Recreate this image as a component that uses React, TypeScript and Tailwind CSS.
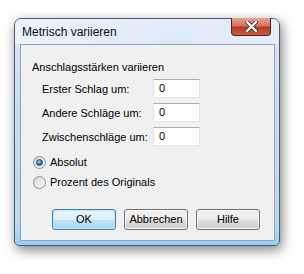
import { useState } from "react";

const font = { fontFamily: '"Liberation Sans", Arial, sans-serif' };

function Field({ label }: { label: string }) {
  return (
    <div className="flex items-center h-[19px]">
      <span className="w-[111px] shrink-0 whitespace-nowrap text-[11px] leading-[16px]">{label}</span>
      <div className="w-[47px] h-[19px] shrink-0 bg-white border border-[#abadb3] border-l-[#e2e3ea] border-r-[#e2e3ea] border-b-[#e3e9ef] flex items-center pl-[5px] text-[11px]">
        0
      </div>
    </div>
  );
}

function Radio({ checked, label, onClick }: { checked: boolean; label: string; onClick: () => void }) {
  return (
    <div className="flex items-center h-[16px] cursor-default" onClick={onClick}>
      <div className="w-[13px] h-[13px] rounded-full border border-[#8a9099] bg-gradient-to-br from-[#d6d6d6] to-[#fafafa] flex items-center justify-center">
        {checked && (
          <div className="w-[7px] h-[7px] rounded-full bg-[radial-gradient(circle_at_40%_35%,#9ad8f8,#1a5e94_70%)] border border-[#1c4f7a]" />
        )}
      </div>
      <span className="ml-[4px] text-[11px] leading-[16px] whitespace-nowrap">{label}</span>
    </div>
  );
}

function Btn({ label, primary }: { label: string; primary?: boolean }) {
  return (
    <div
      className={
        primary
          ? "w-[64px] h-[21px] rounded-[3px] border border-[#3c7fb1] bg-[linear-gradient(#ebf6fd_0%,#dcf0fb_50%,#c1e4f7_51%,#a9d9f3_100%)] shadow-[inset_0_0_0_1px_#c0e6fa] flex items-center justify-center text-[11px]"
          : "w-[64px] h-[21px] rounded-[3px] border border-[#707070] bg-[linear-gradient(#f2f2f2_0%,#ebebeb_50%,#dddddd_51%,#cfcfcf_100%)] shadow-[inset_0_0_0_1px_#fbfbfb] flex items-center justify-center text-[11px]"
      }
    >
      {label}
    </div>
  );
}

export default function App() {
  const [mode, setMode] = useState("abs");
  return (
    <div className="w-[304px] h-[274px] bg-white pt-[18px] pl-[14px] text-black" style={font}>
      <div className="relative w-[266px] h-[228px] rounded-t-[7px] rounded-b-[5px] border border-[#4d5b6b] bg-[linear-gradient(#dbe8f6_0%,#c9ddf2_40%,#bcd6ef_92%,#8fd0f2_100%)] shadow-[2px_4px_12px_rgba(0,0,0,0.5)] flex flex-col">
        <div className="h-[25px] flex items-center pl-[7px] text-[12px] text-[#0a0f1a] bg-[linear-gradient(90deg,rgba(255,255,255,0.5),rgba(255,255,255,0.15)_60%,rgba(255,255,255,0.35))] rounded-t-[6px]">
          Metrisch variieren
        </div>
        <div className="absolute right-[8px] top-[-1px] w-[40px] h-[18px] rounded-b-[4px] border border-[#5a2121] border-t-0 bg-[linear-gradient(#e8a493_0%,#d2735e_45%,#bb3a27_55%,#c85a3d_100%)] flex items-center justify-center">
          <svg width="13" height="11" viewBox="0 0 13 11">
            <path d="M2 1 L11 10 M11 1 L2 10" stroke="#3b3b3b" strokeWidth="4" strokeLinecap="square" />
            <path d="M2 1 L11 10 M11 1 L2 10" stroke="#ffffff" strokeWidth="2.2" strokeLinecap="square" />
          </svg>
        </div>
        <div className="ml-[5px] mr-[4px] h-[197px] border border-[#8da2bb] bg-[#f0f0f0] flex flex-col pl-[11px] pt-[14px]">
          <div className="text-[11px] leading-[16px] whitespace-nowrap">Anschlagsstärken variieren</div>
          <div className="flex flex-col gap-[5px] pl-[10px] mt-[4px]">
            <Field label="Erster Schlag um:" />
            <Field label="Andere Schläge um:" />
            <Field label="Zwischenschläge um:" />
          </div>
          <div className="flex flex-col gap-[4px] mt-[8px] pl-[1px]">
            <Radio checked={mode === "abs"} label="Absolut" onClick={() => setMode("abs")} />
            <Radio checked={mode === "pct"} label="Prozent des Originals" onClick={() => setMode("pct")} />
          </div>
          <div className="flex gap-[8px] mt-[19px] pl-[20px]">
            <Btn label="OK" primary />
            <Btn label="Abbrechen" />
            <Btn label="Hilfe" />
          </div>
        </div>
      </div>
    </div>
  );
}
